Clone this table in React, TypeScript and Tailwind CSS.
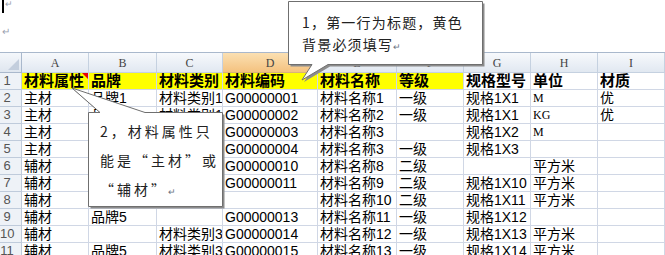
import React from "react";

const cols = ["A", "B", "C", "D", "E", "F", "G", "H", "I"];

// cells under the second note are left blank: the note hides them
const rows: string[][] = [
  ["材料属性", "品牌", "材料类别", "材料编码", "材料名称", "等级", "规格型号", "单位", "材质"],
  ["主材", "品牌1", "材料类别1", "G00000001", "材料名称1", "一级", "规格1X1", "M", "优"],
  ["主材", "品牌1", "材料类别1", "G00000002", "材料名称2", "一级", "规格1X1", "KG", "优"],
  ["主材", "", "", "G00000003", "材料名称3", "", "规格1X2", "M", ""],
  ["主材", "", "", "G00000004", "材料名称3", "一级", "规格1X3", "", ""],
  ["辅材", "", "", "G00000010", "材料名称8", "二级", "", "平方米", ""],
  ["辅材", "", "", "G00000011", "材料名称9", "二级", "规格1X10", "平方米", ""],
  ["辅材", "", "", "", "材料名称10", "二级", "规格1X11", "平方米", ""],
  ["辅材", "品牌5", "", "G00000013", "材料名称11", "一级", "规格1X12", "", ""],
  ["辅材", "", "材料类别3", "G00000014", "材料名称12", "一级", "规格1X13", "平方米", ""],
  ["辅材", "品牌5", "材料类别3", "G00000015", "材料名称13", "一级", "规格1X14", "平方米", ""],
];

const sheetFont = { fontFamily: '"Liberation Sans", "Noto Sans CJK SC", sans-serif' };
const noteFont = { fontFamily: '"Noto Sans CJK SC", "Liberation Sans", sans-serif' };

const App: React.FC = () => {
  return (
    <div className="relative w-[665px] h-[255px] overflow-hidden bg-white text-black" style={sheetFont}>
      {/* document area above the sheet */}
      <div className="h-[52px] relative">
        <div className="absolute left-[2px] top-0 w-[2px] h-[13px] bg-black" />
        <span className="absolute left-[5px] top-[-2px] text-[9px] text-gray-400">↵</span>
        <span className="absolute left-[2px] top-[24px] text-[10px] text-gray-400">↵</span>
      </div>

      <div className="grid grid-cols-[22px_67px_68px_66px_95px_79px_67px_67px_67px_67px] grid-rows-[20px] auto-rows-[17px] border-t border-[#a9b8cc]">
        {/* corner */}
        <div className="relative bg-gradient-to-b from-[#f4f7fb] to-[#dfe6ef] border-r border-b border-[#a9b8cc]">
          <div className="absolute right-[2px] bottom-[2px] w-0 h-0 border-l-[11px] border-l-transparent border-b-[11px] border-b-[#c3cedd]" />
        </div>
        {cols.map((c) => (
          <div
            key={c}
            className={
              c === "D"
                ? "flex items-center justify-center bg-gradient-to-b from-[#fbe0b2] to-[#f4c27f] border-r border-b border-[#d9b27a] text-[12px] text-[#444]"
                : "flex items-center justify-center bg-gradient-to-b from-[#f7f9fc] to-[#e1e8f1] border-r border-b border-[#c5d1e0] text-[12px] text-[#444]"
            }
            style={{ fontFamily: '"Liberation Serif", serif' }}
          >
            {c}
          </div>
        ))}

        {rows.map((r, ri) => (
          <React.Fragment key={ri}>
            <div className="flex items-center bg-[#eef2f7] border-r border-b border-[#bfcbdb] text-[13px] text-[#555]">
              <span className="w-[14px] text-center">{ri + 1}</span>
            </div>
            {r.map((v, ci) => (
              <div
                key={ci}
                className={
                  ri === 0 && ci < 6
                    ? "relative flex items-center pl-[2px] bg-[#ffff00] border-r border-b border-[#d0d7e5] text-[15px] font-bold whitespace-nowrap overflow-hidden"
                    : ri === 0
                    ? "relative flex items-center pl-[2px] border-r border-b border-[#d0d7e5] text-[15px] font-bold whitespace-nowrap overflow-hidden"
                    : "relative flex items-center pl-[2px] border-r border-b border-[#d0d7e5] text-[14px] whitespace-nowrap overflow-hidden"
                }
                style={ci === 7 && /^[A-Z]+$/.test(v) ? { fontFamily: '"Liberation Serif", serif', fontSize: 12 } : undefined}
              >
                {v}
                {ri === 0 && ci === 0 && (
                  <div className="absolute right-0 top-0 w-0 h-0 border-l-[6px] border-l-transparent border-t-[6px] border-t-red-600" />
                )}
              </div>
            ))}
          </React.Fragment>
        ))}
      </div>

      {/* callout shapes */}
      <svg className="absolute left-0 top-0 pointer-events-none" width="665" height="255">
        <g transform="translate(2,2)">
          <path d="M288.5 1.5 H482.5 V64.5 H328 L302 80 L312 64.5 H288.5 Z" fill="#8c8c8c" />
          <path d="M88.5 112.5 H100 L72 88 L145 112.5 H222.5 V206.5 H88.5 Z" fill="#8c8c8c" />
        </g>
        <path d="M288.5 1.5 H482.5 V64.5 H328 L302 80 L312 64.5 H288.5 Z" fill="#ffffff" stroke="#6f6f6f" strokeWidth="1" />
        <path d="M88.5 112.5 H100 L72 88 L145 112.5 H222.5 V206.5 H88.5 Z" fill="#ffffff" stroke="#6f6f6f" strokeWidth="1" />
      </svg>

      <div className="absolute left-[302px] top-[11px] text-[14px] leading-[22px] tracking-[1.2px] text-[#222]" style={noteFont}>
        <div>1，第一行为标题，黄色</div>
        <div>
          背景必须填写<span className="text-[9px] text-gray-500">↵</span>
        </div>
      </div>

      <div className="absolute left-[100px] top-[117px] text-[14px] leading-[29px] tracking-[3px] text-[#222]" style={noteFont}>
        <div>2，材料属性只</div>
        <div>能是“主材”或</div>
        <div>
          “辅材”<span className="text-[9px] text-gray-500">↵</span>
        </div>
      </div>
    </div>
  );
};

export default App;
